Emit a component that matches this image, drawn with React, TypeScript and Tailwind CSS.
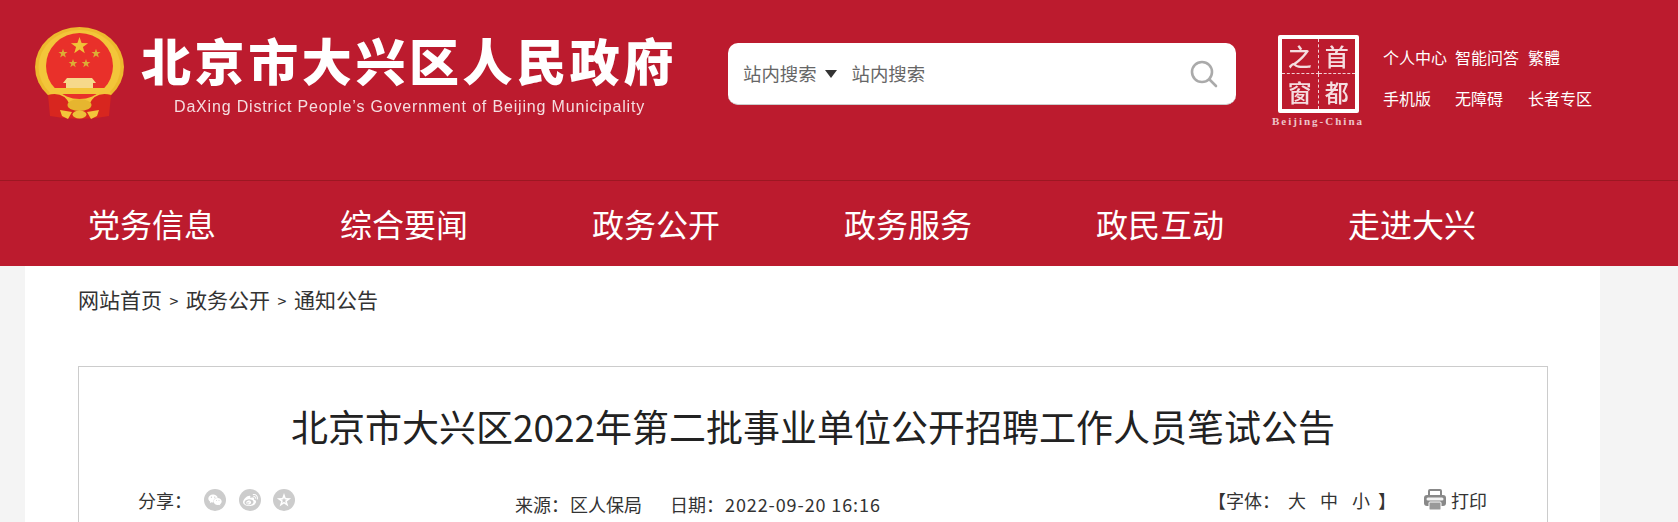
import { FaWeixin, FaWeibo } from "react-icons/fa";

const CJK = "[font-family:'Noto_Sans_CJK_SC','Noto_Sans',sans-serif]";

function Star({ cx, cy, r, fill }: { cx: number; cy: number; r: number; fill: string }) {
  const pts: string[] = [];
  for (let i = 0; i < 10; i++) {
    const rad = i % 2 === 0 ? r : r * 0.4;
    const a = (Math.PI / 5) * i - Math.PI / 2;
    pts.push(`${(cx + rad * Math.cos(a)).toFixed(2)},${(cy + rad * Math.sin(a)).toFixed(2)}`);
  }
  return <polygon points={pts.join(" ")} fill={fill} />;
}

function Emblem() {
  return (
    <svg width="89" height="94" viewBox="15 12 89 94" className="block blur-[0.5px]">
      <ellipse cx="59.5" cy="52" rx="44.5" ry="40" fill="#edb92e" />
      <ellipse cx="59.5" cy="52" rx="41" ry="37" fill="#f3c53a" />
      <ellipse cx="59.5" cy="51" rx="33.5" ry="33" fill="#e9302a" />
      <Star cx={59.5} cy={31} r={9} fill="#f0c238" />
      <Star cx={43} cy={38.5} r={4.8} fill="#dcae35" />
      <Star cx={76} cy={38.5} r={4.8} fill="#dcae35" />
      <Star cx={53} cy={48.5} r={4.6} fill="#dcae35" />
      <Star cx={66} cy={48.5} r={4.6} fill="#dcae35" />
      <path d="M47 63 L72 63 L76 68 L43 68 Z" fill="#f6d98a" />
      <rect x="46" y="68" width="27" height="5" fill="#f6d98a" />
      <path d="M31 73 L88 73 L91 79 L29 79 Z" fill="#f3c53a" />
      <path d="M28 80 Q44 76 50 90 L58 96 L61 96 L69 90 Q75 76 91 80 L89 101 Q60 107 30 101 Z" fill="#d8261f" />
      <ellipse cx="59.5" cy="90" rx="12" ry="6" fill="#e6b52f" />
      <path d="M40 95 L52 97 L48 104 L42 101 Z M79 95 L67 97 L71 104 L77 101 Z" fill="#f3c53a" />
      <ellipse cx="59.5" cy="99.5" rx="7" ry="4" fill="#edc039" />
    </svg>
  );
}

function CapitalLogo() {
  return (
    <div className="w-[91px]">
      <div className={`ml-[6px] grid h-[78px] w-[81px] grid-cols-2 grid-rows-2 rounded-[2px] border-[4px] border-white text-[24px] font-medium leading-none text-white/85 blur-[0.4px] ${CJK}`}>
        <span className="flex items-center justify-center border-b border-r border-dashed border-white/80">之</span>
        <span className="flex items-center justify-center border-b border-dashed border-white/80">首</span>
        <span className="flex items-center justify-center border-r border-dashed border-white/80">窗</span>
        <span className="flex items-center justify-center">都</span>
      </div>
      <div className="mt-[1px] whitespace-nowrap text-center text-[11px] font-bold leading-[14px] tracking-[2px] text-white/75 [font-family:'Liberation_Serif',serif]">
        Beijing-China
      </div>
    </div>
  );
}

function PrintIcon() {
  return (
    <svg width="24" height="22" viewBox="0 0 24 22" className="block">
      <path d="M6 6 V2 Q6 1 7 1 H17 Q18 1 18 2 V6" fill="none" stroke="#888" strokeWidth="2" />
      <rect x="1" y="6" width="22" height="11" rx="3" fill="#888" />
      <rect x="3.5" y="8.5" width="17" height="3" rx="1.5" fill="#fff" opacity="0.9" />
      <rect x="6" y="13" width="12" height="8" rx="1" fill="#999" stroke="#fff" strokeWidth="1" />
    </svg>
  );
}

const navItems = ["党务信息", "综合要闻", "政务公开", "政务服务", "政民互动", "走进大兴"];

export default function App() {
  return (
    <div className={`h-[522px] w-[1678px] overflow-hidden bg-[#f4f4f4] ${CJK}`}>
      <header className="flex h-[181px] items-start border-b border-[#9c1722] bg-[#bc1b2e] pl-[35px] pt-[27px]">
        <Emblem />
        <div className="ml-[17px] w-[587px] pt-[3px]">
          <div className="whitespace-nowrap text-[50px] font-black leading-[58px] tracking-[3.6px] text-white blur-[0.3px]">
            北京市大兴区人民政府
          </div>
          <div className="ml-[33px] mt-[10px] whitespace-nowrap text-[16px] leading-[18px] tracking-[0.83px] text-white/85 blur-[0.3px] [font-family:'Liberation_Sans',sans-serif]">
            DaXing District People’s Government of Beijing Municipality
          </div>
        </div>
        <div className="mt-[16px] flex h-[62px] w-[508px] items-center rounded-[10px] border-b border-[#cccccc] bg-white pl-[15px] pr-[18px] text-[18.4px] text-[#666666]">
          <span>站内搜索</span>
          <span className="ml-[8px] h-0 w-0 border-x-[6.5px] border-t-[8px] border-x-transparent border-t-[#333333]" />
          <span className="ml-[15px] flex-1">站内搜索</span>
          <svg width="28" height="28" viewBox="0 0 28 28" fill="none" stroke="#aaaaaa" strokeWidth="2.6">
            <circle cx="12" cy="12" r="10" />
            <path d="M19.5 19.5 L26 26" strokeLinecap="round" />
          </svg>
        </div>
        <div className="ml-[36px] mt-[8px]">
          <CapitalLogo />
        </div>
        <div className="ml-[20px] mt-[10px] grid grid-cols-[72px_73px_auto] whitespace-nowrap text-[16px] leading-[41px] text-white">
          <span>个人中心</span>
          <span>智能问答</span>
          <span>繁體</span>
          <span>手机版</span>
          <span>无障碍</span>
          <span>长者专区</span>
        </div>
      </header>

      <nav className="flex h-[85px] items-center bg-[#bc1b2e] pb-[2px] pl-[88px] text-[32px] leading-[44px] text-white">
        {navItems.map((n) => (
          <span key={n} className="w-[252px] whitespace-nowrap">
            {n}
          </span>
        ))}
      </nav>

      <main className="ml-[25px] h-[256px] w-[1575px] bg-white pl-[53px] text-[#333333]">
        <div className="flex h-[100px] items-start pt-[18px] text-[21px] leading-[30px]">
          <span>网站首页</span>
          <span className="mx-[6px] mt-[1px] w-[12px] text-center text-[16px]">&gt;</span>
          <span>政务公开</span>
          <span className="mx-[6px] mt-[1px] w-[12px] text-center text-[16px]">&gt;</span>
          <span>通知公告</span>
        </div>
        <section className="h-[200px] w-[1470px] border border-[#cccccc]">
          <h1 className="mt-[33px] text-center text-[37px] font-normal leading-[52px] text-[#222222]">
            北京市大兴区2022年第二批事业单位公开招聘工作人员笔试公告
          </h1>
          <div className="mt-[34px] flex items-start whitespace-nowrap pl-[59px] text-[18px] leading-[28px]">
            <div className="flex w-[377px] items-center">
              <span className="w-[66px]">分享：</span>
              <span className="flex h-[22px] w-[22px] items-center justify-center rounded-full bg-[#cccccc] text-[14px] text-white">
                <FaWeixin />
              </span>
              <span className="ml-[13px] flex h-[22px] w-[22px] items-center justify-center rounded-full bg-[#cccccc] text-[15px] text-white">
                <FaWeibo />
              </span>
              <span className="ml-[12px] flex h-[22px] w-[22px] items-center justify-center rounded-full bg-[#cccccc]">
                <svg width="16" height="16" viewBox="0 0 16 16">
                  <Star cx={8} cy={8.5} r={7.5} fill="#ffffff" />
                  <Star cx={8} cy={8.5} r={3} fill="#cccccc" />
                </svg>
              </span>
            </div>
            <div className="mt-[4px] flex w-[693px]">
              <span>来源：</span>
              <span className="ml-[1px]">区人保局</span>
              <span className="ml-[28px]">日期：</span>
              <span className="ml-[1px] tracking-[0.9px]">2022-09-20 16:16</span>
            </div>
            <div className="flex items-center">
              <span className="w-[9px] overflow-visible">【</span>
              <span className="ml-[9px]">字体：</span>
              <span className="ml-[8px]">大</span>
              <span className="ml-[14px]">中</span>
              <span className="ml-[14px]">小</span>
              <span className="ml-[8px]">】</span>
              <span className="ml-[27px]"><PrintIcon /></span>
              <span className="ml-[4px]">打印</span>
            </div>
          </div>
        </section>
      </main>
    </div>
  );
}
